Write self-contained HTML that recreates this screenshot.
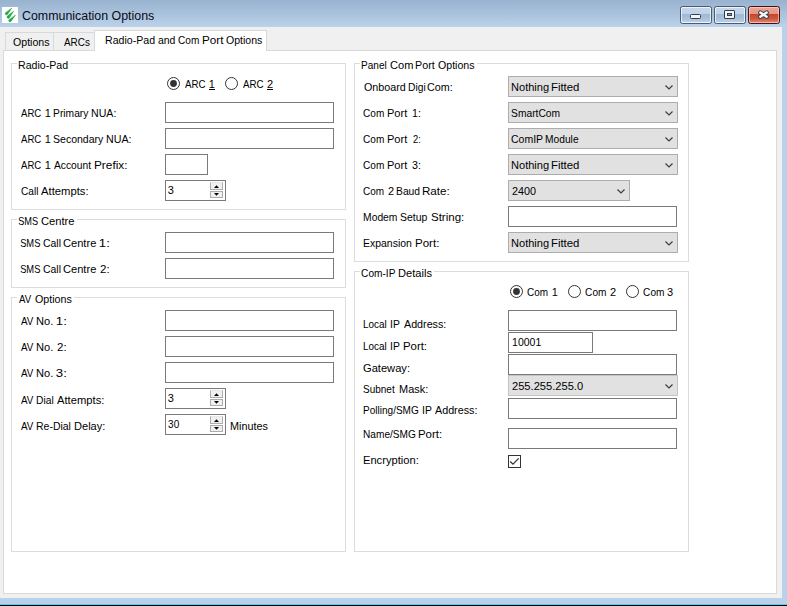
<!DOCTYPE html>
<html><head><meta charset="utf-8"><style>
html,body{margin:0;padding:0;width:787px;height:606px;overflow:hidden;background:#f0f0f0;position:relative}
.a,.t,.btn,.sb{position:absolute;display:block}
.t{font-family:'Liberation Sans', sans-serif;line-height:13px;white-space:pre}
.btn{box-sizing:border-box;border:1px solid #4c5a6d;border-radius:2.5px;background:linear-gradient(#c5d7ec 0%,#bed2e9 45%,#9fb9d6 46%,#a9c1dc 75%,#c2d6ec 100%);box-shadow:inset 0 0 0 1px rgba(255,255,255,.7)}
.btn.cls{border-color:#4a1010;background:linear-gradient(#e9a899 0%,#e39482 45%,#c7452a 46%,#cc5a40 75%,#e0907a 100%);box-shadow:inset 0 0 0 1px rgba(255,220,210,.6)}
.g{position:absolute}
.min{left:9px;top:7px;width:9px;height:3px;background:#f4f4f4;border:1px solid #333c48;border-radius:1.5px}
.max{left:9px;top:3px;width:9px;height:7px;background:#f4f4f4;border:1px solid #333c48;border-radius:1px}
.max div{position:absolute;left:2px;top:2px;width:3px;height:1px;background:#8aa3c4;border:1px solid #333c48}
.sb{width:13px;box-sizing:border-box;background:#f0f0f0;border:1px solid #acacac}
.sb i{position:absolute;left:3px;width:0;height:0;border-left:3px solid transparent;border-right:3px solid transparent}
.sb i.up{top:1px;border-bottom:3px solid #000}
.sb i.dn{top:1px;border-top:3px solid #000}
</style></head><body>
<div class="a" style="left:0;top:0;width:787px;height:27px;background:linear-gradient(#98b2cf,#bad2ea)"></div>
<div class="a" style="left:782px;top:27px;width:5px;height:577px;background:#b9d1ea"></div>
<div class="a" style="left:0px;top:598px;width:787px;height:6px;background:#b9d1ea"></div>
<div class="a" style="left:0px;top:604px;width:787px;height:1px;background:#38dcf0"></div>
<div class="a" style="left:0px;top:605px;width:787px;height:1px;background:#000"></div>
<svg class="a" style="left:2px;top:7px" width="16" height="16" viewBox="0 0 16 16"><rect width="16" height="16" fill="#fff"/><g fill="#1fb040" stroke="#158a34" stroke-width="0.35"><path d="M5.47,7.54 L9.90,1.00 L3.53,5.66 A1.35,1.35 0 0 0 5.47,7.54 Z"/><path d="M7.29,10.92 L11.70,4.20 L5.31,9.08 A1.35,1.35 0 0 0 7.29,10.92 Z"/><path d="M8.96,14.55 L13.60,7.90 L7.04,12.65 A1.35,1.35 0 0 0 8.96,14.55 Z"/></g></svg>
<div class="btn" style="left:680px;top:6px;width:32px;height:18px"><div class="g min"></div></div>
<div class="btn" style="left:714px;top:6px;width:32px;height:18px"><div class="g max"><div></div></div></div>
<div class="btn cls" style="left:748px;top:6px;width:32px;height:18px"><svg class="a" style="left:9px;top:3px" width="13" height="11" viewBox="0 0 13 11"><path d="M2.3,2.6 L8.7,6.7 M8.7,2.6 L2.3,6.7" stroke="#3a4450" stroke-width="4.4" stroke-linecap="round"/><path d="M2.3,2.6 L8.7,6.7 M8.7,2.6 L2.3,6.7" stroke="#fafafa" stroke-width="2.4" stroke-linecap="round"/></svg></div>
<div class="a" style="left:3px;top:50px;width:774px;height:544px;background:#fff;border:1px solid #d9d9d9;box-sizing:border-box"></div>
<div class="a" style="left:5px;top:32px;width:49px;height:19px;background:#f0f0f0;border:1px solid #d9d9d9;box-sizing:border-box"></div>
<div class="a" style="left:53px;top:32px;width:42px;height:19px;background:#f0f0f0;border:1px solid #d9d9d9;box-sizing:border-box"></div>
<div class="a" style="left:94px;top:30px;width:173px;height:21px;background:#fff;border:1px solid #d9d9d9;border-bottom:none;box-sizing:border-box"></div>
<div class="a" style="left:11px;top:63px;width:335px;height:147px;border:1px solid #dcdcdc;box-sizing:border-box"></div>
<div class="a" style="left:17px;top:63px;width:53px;height:1px;background:#fff"></div>
<div class="a" style="left:11px;top:219px;width:335px;height:69px;border:1px solid #dcdcdc;box-sizing:border-box"></div>
<div class="a" style="left:17px;top:219px;width:60px;height:1px;background:#fff"></div>
<div class="a" style="left:11px;top:297px;width:335px;height:255px;border:1px solid #dcdcdc;box-sizing:border-box"></div>
<div class="a" style="left:17px;top:297px;width:57px;height:1px;background:#fff"></div>
<div class="a" style="left:354px;top:63px;width:335px;height:199px;border:1px solid #dcdcdc;box-sizing:border-box"></div>
<div class="a" style="left:360px;top:63px;width:117px;height:1px;background:#fff"></div>
<div class="a" style="left:354px;top:271px;width:335px;height:281px;border:1px solid #dcdcdc;box-sizing:border-box"></div>
<div class="a" style="left:360px;top:271px;width:74px;height:1px;background:#fff"></div>
<div class="a" style="left:165px;top:102px;width:169px;height:21px;background:#fff;border:1px solid #7a7a7a;box-sizing:border-box"></div>
<div class="a" style="left:165px;top:128px;width:169px;height:21px;background:#fff;border:1px solid #7a7a7a;box-sizing:border-box"></div>
<div class="a" style="left:165px;top:154px;width:43px;height:21px;background:#fff;border:1px solid #7a7a7a;box-sizing:border-box"></div>
<div class="a" style="left:165px;top:180px;width:61px;height:21px;background:#fff;border:1px solid #7a7a7a;box-sizing:border-box"></div>
<div class="sb" style="left:210px;top:182px;height:8px;border-top-color:#e6e6e6"></div>
<div class="sb" style="left:210px;top:191px;height:7px"></div>
<svg class="a" style="left:214px;top:185px" width="5" height="3" viewBox="0 0 5 3"><polygon points="0,3 2.5,0.2 5,3" fill="#000"/></svg>
<svg class="a" style="left:214px;top:193px" width="5" height="3" viewBox="0 0 5 3"><polygon points="0,0 2.5,2.8 5,0" fill="#000"/></svg>
<div class="a" style="left:165px;top:232px;width:169px;height:21px;background:#fff;border:1px solid #7a7a7a;box-sizing:border-box"></div>
<div class="a" style="left:165px;top:258px;width:169px;height:21px;background:#fff;border:1px solid #7a7a7a;box-sizing:border-box"></div>
<div class="a" style="left:165px;top:310px;width:169px;height:21px;background:#fff;border:1px solid #7a7a7a;box-sizing:border-box"></div>
<div class="a" style="left:165px;top:336px;width:169px;height:21px;background:#fff;border:1px solid #7a7a7a;box-sizing:border-box"></div>
<div class="a" style="left:165px;top:362px;width:169px;height:21px;background:#fff;border:1px solid #7a7a7a;box-sizing:border-box"></div>
<div class="a" style="left:165px;top:388px;width:61px;height:21px;background:#fff;border:1px solid #7a7a7a;box-sizing:border-box"></div>
<div class="sb" style="left:210px;top:390px;height:8px;border-top-color:#e6e6e6"></div>
<div class="sb" style="left:210px;top:399px;height:7px"></div>
<svg class="a" style="left:214px;top:393px" width="5" height="3" viewBox="0 0 5 3"><polygon points="0,3 2.5,0.2 5,3" fill="#000"/></svg>
<svg class="a" style="left:214px;top:401px" width="5" height="3" viewBox="0 0 5 3"><polygon points="0,0 2.5,2.8 5,0" fill="#000"/></svg>
<div class="a" style="left:165px;top:414px;width:61px;height:21px;background:#fff;border:1px solid #7a7a7a;box-sizing:border-box"></div>
<div class="sb" style="left:210px;top:416px;height:8px;border-top-color:#e6e6e6"></div>
<div class="sb" style="left:210px;top:425px;height:7px"></div>
<svg class="a" style="left:214px;top:419px" width="5" height="3" viewBox="0 0 5 3"><polygon points="0,3 2.5,0.2 5,3" fill="#000"/></svg>
<svg class="a" style="left:214px;top:427px" width="5" height="3" viewBox="0 0 5 3"><polygon points="0,0 2.5,2.8 5,0" fill="#000"/></svg>
<div class="a" style="left:508px;top:76px;width:170px;height:21px;background:#e1e1e1;border:1px solid #adadad;box-sizing:border-box"></div>
<svg class="a" style="left:665px;top:84.7px" width="8" height="5" viewBox="0 0 8 5"><path d="M0.5,0.5 L4,4 L7.5,0.5" fill="none" stroke="#3a3a3a" stroke-width="1.15"/></svg>
<div class="a" style="left:508px;top:102px;width:170px;height:21px;background:#e1e1e1;border:1px solid #adadad;box-sizing:border-box"></div>
<svg class="a" style="left:665px;top:110.7px" width="8" height="5" viewBox="0 0 8 5"><path d="M0.5,0.5 L4,4 L7.5,0.5" fill="none" stroke="#3a3a3a" stroke-width="1.15"/></svg>
<div class="a" style="left:508px;top:128px;width:170px;height:21px;background:#e1e1e1;border:1px solid #adadad;box-sizing:border-box"></div>
<svg class="a" style="left:665px;top:136.7px" width="8" height="5" viewBox="0 0 8 5"><path d="M0.5,0.5 L4,4 L7.5,0.5" fill="none" stroke="#3a3a3a" stroke-width="1.15"/></svg>
<div class="a" style="left:508px;top:154px;width:170px;height:21px;background:#e1e1e1;border:1px solid #adadad;box-sizing:border-box"></div>
<svg class="a" style="left:665px;top:162.7px" width="8" height="5" viewBox="0 0 8 5"><path d="M0.5,0.5 L4,4 L7.5,0.5" fill="none" stroke="#3a3a3a" stroke-width="1.15"/></svg>
<div class="a" style="left:508px;top:180px;width:122px;height:21px;background:#e1e1e1;border:1px solid #adadad;box-sizing:border-box"></div>
<svg class="a" style="left:617px;top:188.7px" width="8" height="5" viewBox="0 0 8 5"><path d="M0.5,0.5 L4,4 L7.5,0.5" fill="none" stroke="#3a3a3a" stroke-width="1.15"/></svg>
<div class="a" style="left:508px;top:206px;width:169px;height:21px;background:#fff;border:1px solid #7a7a7a;box-sizing:border-box"></div>
<div class="a" style="left:508px;top:232px;width:170px;height:21px;background:#e1e1e1;border:1px solid #adadad;box-sizing:border-box"></div>
<svg class="a" style="left:665px;top:240.7px" width="8" height="5" viewBox="0 0 8 5"><path d="M0.5,0.5 L4,4 L7.5,0.5" fill="none" stroke="#3a3a3a" stroke-width="1.15"/></svg>
<div class="a" style="left:508px;top:310px;width:169px;height:21px;background:#fff;border:1px solid #7a7a7a;box-sizing:border-box"></div>
<div class="a" style="left:508px;top:332px;width:85px;height:21px;background:#fff;border:1px solid #7a7a7a;box-sizing:border-box"></div>
<div class="a" style="left:508px;top:354px;width:169px;height:21px;background:#fff;border:1px solid #7a7a7a;box-sizing:border-box"></div>
<div class="a" style="left:508px;top:375px;width:170px;height:21px;background:#e1e1e1;border:1px solid #c4c4c4;box-sizing:border-box"></div>
<svg class="a" style="left:665px;top:383.7px" width="8" height="5" viewBox="0 0 8 5"><path d="M0.5,0.5 L4,4 L7.5,0.5" fill="none" stroke="#3a3a3a" stroke-width="1.15"/></svg>
<div class="a" style="left:508px;top:398px;width:169px;height:21px;background:#fff;border:1px solid #7a7a7a;box-sizing:border-box"></div>
<div class="a" style="left:508px;top:428px;width:169px;height:21px;background:#fff;border:1px solid #7a7a7a;box-sizing:border-box"></div>
<svg class="a" style="left:508px;top:455px" width="13" height="13" viewBox="0 0 13 13"><rect x="0.5" y="0.5" width="12" height="12" fill="#fff" stroke="#333"/><path d="M2.2,6.5 L5,9.2 L10.7,3.4" fill="none" stroke="#333" stroke-width="1.3"/></svg>
<svg class="a" style="left:167px;top:77px" width="13" height="13" viewBox="0 0 13 13"><circle cx="6.5" cy="6.5" r="6" fill="#fff" stroke="#333" stroke-width="1"/><circle cx="6.5" cy="6.5" r="3.4" fill="#333"/></svg>
<svg class="a" style="left:225px;top:77px" width="13" height="13" viewBox="0 0 13 13"><circle cx="6.5" cy="6.5" r="6" fill="#fff" stroke="#333" stroke-width="1"/></svg>
<svg class="a" style="left:510px;top:285px" width="13" height="13" viewBox="0 0 13 13"><circle cx="6.5" cy="6.5" r="6" fill="#fff" stroke="#333" stroke-width="1"/><circle cx="6.5" cy="6.5" r="3.4" fill="#333"/></svg>
<svg class="a" style="left:568px;top:285px" width="13" height="13" viewBox="0 0 13 13"><circle cx="6.5" cy="6.5" r="6" fill="#fff" stroke="#333" stroke-width="1"/></svg>
<svg class="a" style="left:626px;top:285px" width="13" height="13" viewBox="0 0 13 13"><circle cx="6.5" cy="6.5" r="6" fill="#fff" stroke="#333" stroke-width="1"/></svg>
<div class="a" style="left:209px;top:89px;width:6px;height:1px;background:#000"></div>
<div class="a" style="left:267px;top:89px;width:6px;height:1px;background:#000"></div>
<span class="t" style="left:21.60px;top:10px;font-size:12.5px;transform-origin:1.0px 0;transform:scaleX(0.9917);color:#0a0a14">Communication Options</span>
<span class="t" style="left:12.70px;top:36px;font-size:11px;transform-origin:0.0px 0;transform:scaleX(0.9632);color:#000">Options</span>
<span class="t" style="left:63.50px;top:36px;font-size:11px;transform-origin:0.0px 0;transform:scaleX(0.9000);color:#000">ARCs</span>
<span class="t" style="left:104.70px;top:34px;font-size:11px;transform-origin:1.0px 0;transform:scaleX(0.9620);color:#000">Radio-Pad</span>
<span class="t" style="left:157.80px;top:34px;font-size:11px;transform-origin:0.0px 0;transform:scaleX(0.9500);color:#000">and</span>
<span class="t" style="left:177.90px;top:34px;font-size:11px;transform-origin:1.0px 0;transform:scaleX(0.9136);color:#000">Com</span>
<span class="t" style="left:201.60px;top:34px;font-size:11px;transform-origin:1.0px 0;transform:scaleX(1.0632);color:#000">Port</span>
<span class="t" style="left:226.00px;top:34px;font-size:11px;transform-origin:0.0px 0;transform:scaleX(0.9579);color:#000">Options</span>
<span class="t" style="left:17.70px;top:59px;font-size:11px;transform-origin:1.0px 0;transform:scaleX(0.9620);color:#000">Radio-Pad</span>
<span class="t" style="left:17.80px;top:215px;font-size:11px;transform-origin:1.0px 0;transform:scaleX(0.8348);color:#000">SMS</span>
<span class="t" style="left:40.60px;top:215px;font-size:11px;transform-origin:1.0px 0;transform:scaleX(1.0156);color:#000">Centre</span>
<span class="t" style="left:19.10px;top:293px;font-size:11px;transform-origin:0.0px 0;transform:scaleX(0.8786);color:#000">AV</span>
<span class="t" style="left:34.50px;top:293px;font-size:11px;transform-origin:0.0px 0;transform:scaleX(0.9711);color:#000">Options</span>
<span class="t" style="left:360.90px;top:59px;font-size:11px;transform-origin:1.0px 0;transform:scaleX(0.9111);color:#000">Panel</span>
<span class="t" style="left:389.50px;top:59px;font-size:11px;transform-origin:1.0px 0;transform:scaleX(1.0091);color:#000">Com</span>
<span class="t" style="left:415.00px;top:59px;font-size:11px;transform-origin:1.0px 0;transform:scaleX(0.9737);color:#000">Port</span>
<span class="t" style="left:437.80px;top:59px;font-size:11px;transform-origin:0.0px 0;transform:scaleX(0.9632);color:#000">Options</span>
<span class="t" style="left:360.90px;top:267px;font-size:11px;transform-origin:1.0px 0;transform:scaleX(0.9222);color:#000">Com-IP</span>
<span class="t" style="left:397.70px;top:267px;font-size:11px;transform-origin:1.0px 0;transform:scaleX(1.0094);color:#000">Details</span>
<span class="t" style="left:21.00px;top:107px;font-size:11px;transform-origin:0.0px 0;transform:scaleX(0.8696);color:#000">ARC</span>
<span class="t" style="left:44.70px;top:107px;font-size:11px;letter-spacing:0.000px;color:#000">1</span>
<span class="t" style="left:52.80px;top:107px;font-size:11px;transform-origin:1.0px 0;transform:scaleX(0.9324);color:#000">Primary</span>
<span class="t" style="left:91.30px;top:107px;font-size:11px;transform-origin:1.0px 0;transform:scaleX(0.9640);color:#000">NUA:</span>
<span class="t" style="left:21.00px;top:133px;font-size:11px;transform-origin:0.0px 0;transform:scaleX(0.8696);color:#000">ARC</span>
<span class="t" style="left:44.70px;top:133px;font-size:11px;letter-spacing:0.000px;color:#000">1</span>
<span class="t" style="left:52.80px;top:133px;font-size:11px;transform-origin:1.0px 0;transform:scaleX(0.9558);color:#000">Secondary</span>
<span class="t" style="left:106.20px;top:133px;font-size:11px;transform-origin:1.0px 0;transform:scaleX(0.9720);color:#000">NUA:</span>
<span class="t" style="left:21.00px;top:159px;font-size:11px;transform-origin:0.0px 0;transform:scaleX(0.8696);color:#000">ARC</span>
<span class="t" style="left:44.70px;top:159px;font-size:11px;letter-spacing:0.000px;color:#000">1</span>
<span class="t" style="left:54.30px;top:159px;font-size:11px;transform-origin:0.0px 0;transform:scaleX(0.9325);color:#000">Account</span>
<span class="t" style="left:94.40px;top:159px;font-size:11px;transform-origin:1.0px 0;transform:scaleX(1.0793);color:#000">Prefix:</span>
<span class="t" style="left:20.60px;top:185px;font-size:11px;transform-origin:1.0px 0;transform:scaleX(0.9176);color:#000">Call</span>
<span class="t" style="left:40.80px;top:185px;font-size:11px;transform-origin:0.0px 0;transform:scaleX(1.0239);color:#000">Attempts:</span>
<span class="t" style="left:19.60px;top:237px;font-size:11px;transform-origin:1.0px 0;transform:scaleX(0.8478);color:#000">SMS</span>
<span class="t" style="left:42.70px;top:237px;font-size:11px;transform-origin:1.0px 0;transform:scaleX(0.9471);color:#000">Call</span>
<span class="t" style="left:63.00px;top:237px;font-size:11px;transform-origin:1.0px 0;transform:scaleX(1.0094);color:#000">Centre</span>
<span class="t" style="left:99.40px;top:237px;font-size:11px;transform-origin:1.0px 0;transform:scaleX(1.2000);color:#000">1:</span>
<span class="t" style="left:19.60px;top:263px;font-size:11px;transform-origin:1.0px 0;transform:scaleX(0.8478);color:#000">SMS</span>
<span class="t" style="left:42.70px;top:263px;font-size:11px;transform-origin:1.0px 0;transform:scaleX(0.9471);color:#000">Call</span>
<span class="t" style="left:63.00px;top:263px;font-size:11px;transform-origin:1.0px 0;transform:scaleX(1.0094);color:#000">Centre</span>
<span class="t" style="left:100.40px;top:263px;font-size:11px;transform-origin:0.0px 0;transform:scaleX(1.0500);color:#000">2:</span>
<span class="t" style="left:20.90px;top:315px;font-size:11px;transform-origin:0.0px 0;transform:scaleX(0.8929);color:#000">AV</span>
<span class="t" style="left:36.30px;top:315px;font-size:11px;transform-origin:1.0px 0;transform:scaleX(1.0067);color:#000">No.</span>
<span class="t" style="left:56.20px;top:315px;font-size:11px;transform-origin:1.0px 0;transform:scaleX(1.2000);color:#000">1:</span>
<span class="t" style="left:20.90px;top:341px;font-size:11px;transform-origin:0.0px 0;transform:scaleX(0.8929);color:#000">AV</span>
<span class="t" style="left:36.30px;top:341px;font-size:11px;transform-origin:1.0px 0;transform:scaleX(1.0067);color:#000">No.</span>
<span class="t" style="left:57.20px;top:341px;font-size:11px;transform-origin:0.0px 0;transform:scaleX(1.0500);color:#000">2:</span>
<span class="t" style="left:20.90px;top:367px;font-size:11px;transform-origin:0.0px 0;transform:scaleX(0.8929);color:#000">AV</span>
<span class="t" style="left:36.30px;top:367px;font-size:11px;transform-origin:1.0px 0;transform:scaleX(1.0067);color:#000">No.</span>
<span class="t" style="left:56.20px;top:367px;font-size:11px;transform-origin:1.0px 0;transform:scaleX(1.2000);color:#000">3:</span>
<span class="t" style="left:20.90px;top:394px;font-size:11px;transform-origin:0.0px 0;transform:scaleX(0.8929);color:#000">AV</span>
<span class="t" style="left:36.30px;top:394px;font-size:11px;transform-origin:1.0px 0;transform:scaleX(0.9294);color:#000">Dial</span>
<span class="t" style="left:56.90px;top:394px;font-size:11px;transform-origin:0.0px 0;transform:scaleX(1.0196);color:#000">Attempts:</span>
<span class="t" style="left:20.90px;top:420px;font-size:11px;transform-origin:0.0px 0;transform:scaleX(0.8929);color:#000">AV</span>
<span class="t" style="left:36.30px;top:420px;font-size:11px;transform-origin:1.0px 0;transform:scaleX(0.9514);color:#000">Re-Dial</span>
<span class="t" style="left:73.60px;top:420px;font-size:11px;transform-origin:1.0px 0;transform:scaleX(1.0069);color:#000">Delay:</span>
<span class="t" style="left:229.60px;top:420px;font-size:11px;transform-origin:1.0px 0;transform:scaleX(0.9838);color:#000">Minutes</span>
<span class="t" style="left:184.80px;top:78px;font-size:11px;transform-origin:0.0px 0;transform:scaleX(0.8826);color:#000">ARC</span>
<span class="t" style="left:208.70px;top:78px;font-size:11px;letter-spacing:0.000px;color:#000">1</span>
<span class="t" style="left:242.80px;top:78px;font-size:11px;transform-origin:0.0px 0;transform:scaleX(0.8826);color:#000">ARC</span>
<span class="t" style="left:266.90px;top:78px;font-size:11px;letter-spacing:0.000px;color:#000">2</span>
<span class="t" style="left:167.80px;top:184px;font-size:11px;letter-spacing:0.000px;color:#000">3</span>
<span class="t" style="left:167.80px;top:392px;font-size:11px;letter-spacing:0.000px;color:#000">3</span>
<span class="t" style="left:167.60px;top:418px;font-size:11px;transform-origin:1.0px 0;transform:scaleX(0.9091);color:#000">30</span>
<span class="t" style="left:363.80px;top:81px;font-size:11px;transform-origin:0.0px 0;transform:scaleX(0.9762);color:#000">Onboard</span>
<span class="t" style="left:407.60px;top:81px;font-size:11px;transform-origin:1.0px 0;transform:scaleX(0.9353);color:#000">Digi</span>
<span class="t" style="left:427.30px;top:81px;font-size:11px;transform-origin:1.0px 0;transform:scaleX(0.9760);color:#000">Com:</span>
<span class="t" style="left:362.80px;top:107px;font-size:11px;transform-origin:1.0px 0;transform:scaleX(0.9136);color:#000">Com</span>
<span class="t" style="left:386.70px;top:107px;font-size:11px;transform-origin:1.0px 0;transform:scaleX(1.0053);color:#000">Port</span>
<span class="t" style="left:411.60px;top:107px;font-size:11px;transform-origin:1.0px 0;transform:scaleX(0.9714);color:#000">1:</span>
<span class="t" style="left:362.80px;top:133px;font-size:11px;transform-origin:1.0px 0;transform:scaleX(0.9136);color:#000">Com</span>
<span class="t" style="left:386.70px;top:133px;font-size:11px;transform-origin:1.0px 0;transform:scaleX(1.0053);color:#000">Port</span>
<span class="t" style="left:412.60px;top:133px;font-size:11px;transform-origin:0.0px 0;transform:scaleX(0.8500);color:#000">2:</span>
<span class="t" style="left:362.80px;top:159px;font-size:11px;transform-origin:1.0px 0;transform:scaleX(0.9136);color:#000">Com</span>
<span class="t" style="left:386.70px;top:159px;font-size:11px;transform-origin:1.0px 0;transform:scaleX(1.0053);color:#000">Port</span>
<span class="t" style="left:411.60px;top:159px;font-size:11px;transform-origin:1.0px 0;transform:scaleX(0.9714);color:#000">3:</span>
<span class="t" style="left:362.80px;top:185px;font-size:11px;transform-origin:1.0px 0;transform:scaleX(0.9091);color:#000">Com</span>
<span class="t" style="left:388.00px;top:185px;font-size:11px;letter-spacing:0.000px;color:#000">2</span>
<span class="t" style="left:395.60px;top:185px;font-size:11px;transform-origin:1.0px 0;transform:scaleX(0.9333);color:#000">Baud</span>
<span class="t" style="left:422.20px;top:185px;font-size:11px;transform-origin:1.0px 0;transform:scaleX(1.0600);color:#000">Rate:</span>
<span class="t" style="left:362.80px;top:211px;font-size:11px;transform-origin:1.0px 0;transform:scaleX(0.9371);color:#000">Modem</span>
<span class="t" style="left:399.80px;top:211px;font-size:11px;transform-origin:1.0px 0;transform:scaleX(0.9500);color:#000">Setup</span>
<span class="t" style="left:430.60px;top:211px;font-size:11px;transform-origin:1.0px 0;transform:scaleX(1.0467);color:#000">String:</span>
<span class="t" style="left:362.80px;top:237px;font-size:11px;transform-origin:1.0px 0;transform:scaleX(0.9500);color:#000">Expansion</span>
<span class="t" style="left:414.50px;top:237px;font-size:11px;transform-origin:1.0px 0;transform:scaleX(1.0500);color:#000">Port:</span>
<span class="t" style="left:510.90px;top:81px;font-size:11px;transform-origin:1.0px 0;transform:scaleX(1.0056);color:#000">Nothing</span>
<span class="t" style="left:550.70px;top:81px;font-size:11px;transform-origin:1.0px 0;transform:scaleX(1.0346);color:#000">Fitted</span>
<span class="t" style="left:511.30px;top:107px;font-size:11px;transform-origin:1.0px 0;transform:scaleX(0.9314);color:#000">SmartCom</span>
<span class="t" style="left:511.10px;top:133px;font-size:11px;transform-origin:1.0px 0;transform:scaleX(0.9531);color:#000">ComIP</span>
<span class="t" style="left:545.10px;top:133px;font-size:11px;transform-origin:1.0px 0;transform:scaleX(0.9286);color:#000">Module</span>
<span class="t" style="left:510.90px;top:159px;font-size:11px;transform-origin:1.0px 0;transform:scaleX(1.0056);color:#000">Nothing</span>
<span class="t" style="left:550.70px;top:159px;font-size:11px;transform-origin:1.0px 0;transform:scaleX(1.0346);color:#000">Fitted</span>
<span class="t" style="left:511.60px;top:185px;font-size:11px;transform-origin:0.0px 0;transform:scaleX(0.9833);color:#000">2400</span>
<span class="t" style="left:510.90px;top:237px;font-size:11px;transform-origin:1.0px 0;transform:scaleX(1.0056);color:#000">Nothing</span>
<span class="t" style="left:550.70px;top:237px;font-size:11px;transform-origin:1.0px 0;transform:scaleX(1.0346);color:#000">Fitted</span>
<span class="t" style="left:527.00px;top:286px;font-size:11px;transform-origin:1.0px 0;transform:scaleX(0.9045);color:#000">Com</span>
<span class="t" style="left:551.80px;top:286px;font-size:11px;letter-spacing:0.000px;color:#000">1</span>
<span class="t" style="left:585.00px;top:286px;font-size:11px;transform-origin:1.0px 0;transform:scaleX(0.9182);color:#000">Com</span>
<span class="t" style="left:610.10px;top:286px;font-size:11px;letter-spacing:0.000px;color:#000">2</span>
<span class="t" style="left:642.80px;top:286px;font-size:11px;transform-origin:1.0px 0;transform:scaleX(0.9182);color:#000">Com</span>
<span class="t" style="left:667.00px;top:286px;font-size:11px;letter-spacing:0.000px;color:#000">3</span>
<span class="t" style="left:362.70px;top:318px;font-size:11px;transform-origin:1.0px 0;transform:scaleX(0.9000);color:#000">Local</span>
<span class="t" style="left:389.60px;top:318px;font-size:11px;transform-origin:1.0px 0;transform:scaleX(0.9444);color:#000">IP</span>
<span class="t" style="left:403.70px;top:318px;font-size:11px;transform-origin:0.0px 0;transform:scaleX(0.9744);color:#000">Address:</span>
<span class="t" style="left:362.70px;top:340px;font-size:11px;transform-origin:1.0px 0;transform:scaleX(0.9000);color:#000">Local</span>
<span class="t" style="left:389.60px;top:340px;font-size:11px;transform-origin:1.0px 0;transform:scaleX(0.9444);color:#000">IP</span>
<span class="t" style="left:402.70px;top:340px;font-size:11px;transform-origin:1.0px 0;transform:scaleX(1.0364);color:#000">Port:</span>
<span class="t" style="left:363.10px;top:362px;font-size:11px;transform-origin:0.0px 0;transform:scaleX(1.0109);color:#000">Gateway:</span>
<span class="t" style="left:362.70px;top:383px;font-size:11px;transform-origin:1.0px 0;transform:scaleX(0.9059);color:#000">Subnet</span>
<span class="t" style="left:398.90px;top:383px;font-size:11px;transform-origin:1.0px 0;transform:scaleX(0.9964);color:#000">Mask:</span>
<span class="t" style="left:362.70px;top:404px;font-size:11px;transform-origin:1.0px 0;transform:scaleX(0.9102);color:#000">Polling/SMG</span>
<span class="t" style="left:421.60px;top:404px;font-size:11px;transform-origin:1.0px 0;transform:scaleX(0.9444);color:#000">IP</span>
<span class="t" style="left:434.90px;top:404px;font-size:11px;transform-origin:0.0px 0;transform:scaleX(0.9767);color:#000">Address:</span>
<span class="t" style="left:362.70px;top:428px;font-size:11px;transform-origin:1.0px 0;transform:scaleX(0.9179);color:#000">Name/SMG</span>
<span class="t" style="left:417.90px;top:428px;font-size:11px;transform-origin:1.0px 0;transform:scaleX(1.0409);color:#000">Port:</span>
<span class="t" style="left:362.70px;top:454px;font-size:11px;transform-origin:1.0px 0;transform:scaleX(1.0132);color:#000">Encryption:</span>
<span class="t" style="left:511.60px;top:336px;font-size:11px;transform-origin:1.0px 0;transform:scaleX(0.9552);color:#000">10001</span>
<span class="t" style="left:512.20px;top:380px;font-size:11px;transform-origin:0.0px 0;transform:scaleX(1.0114);color:#000">255.255.255.0</span>
</body></html>
